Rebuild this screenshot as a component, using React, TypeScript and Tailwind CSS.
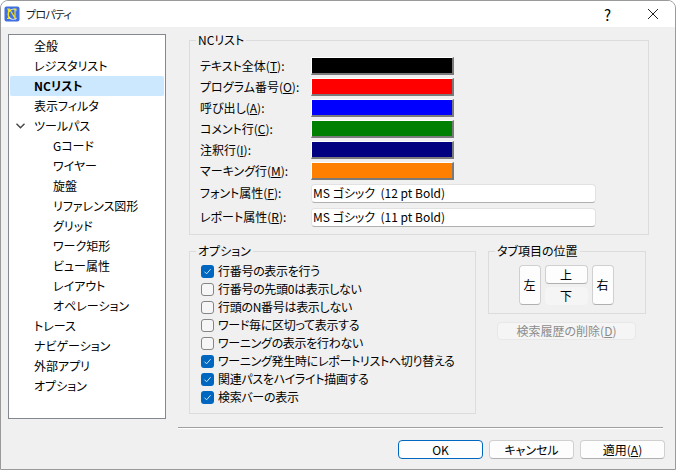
import type { ReactNode } from "react";

const font = { fontFamily: '"Noto Sans CJK JP", "Noto Sans", sans-serif' };

const treeItems = [
  { label: "全般", depth: 0 },
  { label: "レジスタリスト", depth: 0 },
  { label: "NCリスト", depth: 0, selected: true },
  { label: "表示フィルタ", depth: 0 },
  { label: "ツールパス", depth: 0, open: true },
  { label: "Gコード", depth: 1 },
  { label: "ワイヤー", depth: 1 },
  { label: "旋盤", depth: 1 },
  { label: "リファレンス図形", depth: 1 },
  { label: "グリッド", depth: 1 },
  { label: "ワーク矩形", depth: 1 },
  { label: "ビュー属性", depth: 1 },
  { label: "レイアウト", depth: 1 },
  { label: "オペレーション", depth: 1 },
  { label: "トレース", depth: 0 },
  { label: "ナビゲーション", depth: 0 },
  { label: "外部アプリ", depth: 0 },
  { label: "オプション", depth: 0 },
];

const colorRows = [
  { label: "テキスト全体(", key: "T", color: "bg-[#000000]" },
  { label: "プログラム番号(", key: "O", color: "bg-[#ff0000]" },
  { label: "呼び出し(", key: "A", color: "bg-[#0000ff]" },
  { label: "コメント行(", key: "C", color: "bg-[#008000]" },
  { label: "注釈行(", key: "I", color: "bg-[#000080]" },
  { label: "マーキング行(", key: "M", color: "bg-[#ff8000]" },
];

const options = [
  { label: "行番号の表示を行う", on: true },
  { label: "行番号の先頭0は表示しない", on: false },
  { label: "行頭のN番号は表示しない", on: false },
  { label: "ワード毎に区切って表示する", on: false },
  { label: "ワーニングの表示を行わない", on: false },
  { label: "ワーニング発生時にレポートリストへ切り替える", on: true },
  { label: "関連パスをハイライト描画する", on: true },
  { label: "検索バーの表示", on: true },
];

function AppIcon() {
  return (
    <svg width="16" height="16" viewBox="0 0 16 16" className="shrink-0">
      <rect x="0.5" y="0.5" width="15" height="15" rx="2" fill="#3f6fe0" />
      <path d="M12.5 4.5A5 5 0 1 0 12.5 12" fill="none" stroke="#dfe8ff" strokeWidth="1.2" />
      <path d="M3 3h2.5l5.5 9V3M9.5 3h3M4.5 3v9M3 12.5h3" fill="none" stroke="#f5e11c" strokeWidth="1.2" />
    </svg>
  );
}

function GroupBox({
  title,
  className,
  children,
}: {
  title: string;
  className: string;
  children: ReactNode;
}) {
  return (
    <fieldset className={`min-w-0 border border-[#dcdcdc] ${className}`}>
      <legend className="ml-[6px] px-[2px] text-[12px] leading-[16px] text-black">{title}</legend>
      {children}
    </fieldset>
  );
}

function ColorRow({ label, hotkey, color }: { label: string; hotkey: string; color: string }) {
  return (
    <div className="flex h-[21px] items-center">
      <span className="w-[111px] whitespace-nowrap text-[12px]">
        {label}
        <span className="underline">{hotkey}</span>):
      </span>
      <div className={`h-[18px] w-[143px] border border-r-2 border-b-2 border-t-white border-l-white border-r-[#7a7a7a] border-b-[#7a7a7a] ${color}`} />
    </div>
  );
}

function FontRow({ label, hotkey, value }: { label: string; hotkey: string; value: string }) {
  return (
    <div className="flex h-[24px] items-center">
      <span className="w-[111px] whitespace-nowrap text-[12px]">
        {label}
        <span className="underline">{hotkey}</span>):
      </span>
      <div className="flex h-[19px] w-[285px] items-center rounded-[4px] border border-[#e2e2e2] border-b-[#b0b0b0] bg-white pl-[1px] text-[12px] whitespace-pre">
        {value}
      </div>
    </div>
  );
}

function Checkbox({ on }: { on: boolean }) {
  if (on) {
    return (
      <span className="flex h-[13px] w-[13px] shrink-0 items-center justify-center rounded-[3px] bg-[#0067c0]">
        <svg width="9" height="9" viewBox="0 0 9 9">
          <path d="M1.5 4.7L3.6 6.8L7.6 2.2" fill="none" stroke="#cfe4f7" strokeWidth="1" />
        </svg>
      </span>
    );
  }
  return <span className="h-[13px] w-[13px] shrink-0 rounded-[3px] border border-[#858585] bg-[#f6f6f6]" />;
}

function PushButton({ className, children }: { className: string; children: ReactNode }) {
  return (
    <div className={`flex items-center justify-center rounded-[4px] border text-[12px] ${className}`}>
      {children}
    </div>
  );
}

export default function App() {
  return (
    <div style={font} className="flex h-[470px] w-[676px] flex-col overflow-hidden rounded-t-[8px] border border-[#9a9a9a] bg-[#f0f0f0] text-black [font-feature-settings:'palt']">
      <div className="flex h-[26px] shrink-0 items-center bg-white pl-[3px]">
        <AppIcon />
        <span className="ml-[6px] text-[11px] tracking-[-0.8px] text-[#1a1a1a]">プロパティ</span>
        <span className="ml-auto text-[15px] leading-none">?</span>
        <svg width="12" height="12" viewBox="0 0 12 12" className="mr-[16px] ml-[36px]">
          <path d="M1 1L11 11M11 1L1 11" stroke="#222" strokeWidth="1" />
        </svg>
      </div>

      <div className="flex min-h-0 flex-1">
        <div className="mt-[7px] ml-[7px] flex h-[385px] w-[158px] shrink-0 flex-col border border-[#828790] bg-white px-px pt-[1px]">
          {treeItems.map((item) => (
            <div
              key={item.label}
              className={`relative flex h-[20px] shrink-0 items-center rounded-[2px] text-[12px] whitespace-nowrap ${item.selected ? "bg-[#cce8ff] font-bold" : ""} ${item.depth === 1 ? "pl-[43px]" : "pl-[24px]"}`}
            >
              {item.open && (
                <svg width="9" height="6" viewBox="0 0 9 6" className="absolute top-[7px] left-[6px]">
                  <path d="M0.5 0.8L4.5 4.8L8.5 0.8" fill="none" stroke="#444" strokeWidth="1.4" />
                </svg>
              )}
              {item.label}
            </div>
          ))}
        </div>

        <div className="ml-[12px] flex min-w-0 flex-1 flex-col">
          <div className="ml-[11px] flex flex-col">
            <GroupBox title="NCリスト" className="mt-[5px] h-[203px] w-[460px]">
              <div className="pt-[7px] pl-[10px]">
                {colorRows.map((row) => (
                  <ColorRow key={row.key} label={row.label} hotkey={row.key} color={row.color} />
                ))}
                <FontRow label="フォント属性(" hotkey="F" value="MS ゴシック  (12 pt Bold)" />
                <FontRow label="レポート属性(" hotkey="R" value="MS ゴシック  (11 pt Bold)" />
              </div>
            </GroupBox>

            <div className="mt-[8px] flex items-start">
              <GroupBox title="オプション" className="h-[171px] w-[287px]">
                <div className="pt-[3px] pl-[11px]">
                  {options.map((opt) => (
                    <label key={opt.label} className="flex h-[18px] items-center gap-[4px] text-[12px] tracking-[-0.3px] whitespace-nowrap">
                      <Checkbox on={opt.on} />
                      {opt.label}
                    </label>
                  ))}
                </div>
              </GroupBox>

              <div className="ml-[12px] flex flex-col">
                <GroupBox title="タブ項目の位置" className="h-[71px] w-[158px]">
                  <div className="flex justify-center gap-[4px] pt-[6px] pr-[2px]">
                    <PushButton className="h-[40px] w-[22px] border-[#d0d0d0] border-b-[#b0b0b0] bg-[#fdfdfd]">左</PushButton>
                    <div className="flex flex-col gap-[3px]">
                      <PushButton className="h-[19px] w-[43px] border-[#d0d0d0] border-b-[#b0b0b0] bg-[#fdfdfd]">上</PushButton>
                      <PushButton className="h-[18px] w-[43px] border-[#f5f5f5] bg-[#f5f5f5]">下</PushButton>
                    </div>
                    <PushButton className="h-[40px] w-[22px] border-[#d0d0d0] border-b-[#b0b0b0] bg-[#fdfdfd]">右</PushButton>
                  </div>
                </GroupBox>
                <PushButton className="mt-[8px] ml-[9px] h-[18px] w-[139px] border-[#e8e8e8] bg-[#f5f5f5] text-[#8c8c8c]">
                  <span>
                    検索履歴の削除(<span className="underline">D</span>)
                  </span>
                </PushButton>
              </div>
            </div>
          </div>

          <div className="mt-[13px] mr-[12px] h-[2px] border-t border-b border-t-[#a0a0a0] border-b-white" />

          <div className="mt-[11px] mr-[10px] flex justify-end gap-[6px]">
            <PushButton className="h-[19px] w-[85px] border-[#0067c0] bg-[#fdfdfd]">OK</PushButton>
            <PushButton className="h-[19px] w-[85px] border-[#d0d0d0] border-b-[#b0b0b0] bg-[#fdfdfd]">キャンセル</PushButton>
            <PushButton className="h-[19px] w-[85px] border-[#d0d0d0] border-b-[#b0b0b0] bg-[#fdfdfd]">
              <span>
                適用(<span className="underline">A</span>)
              </span>
            </PushButton>
          </div>
        </div>
      </div>
    </div>
  );
}
